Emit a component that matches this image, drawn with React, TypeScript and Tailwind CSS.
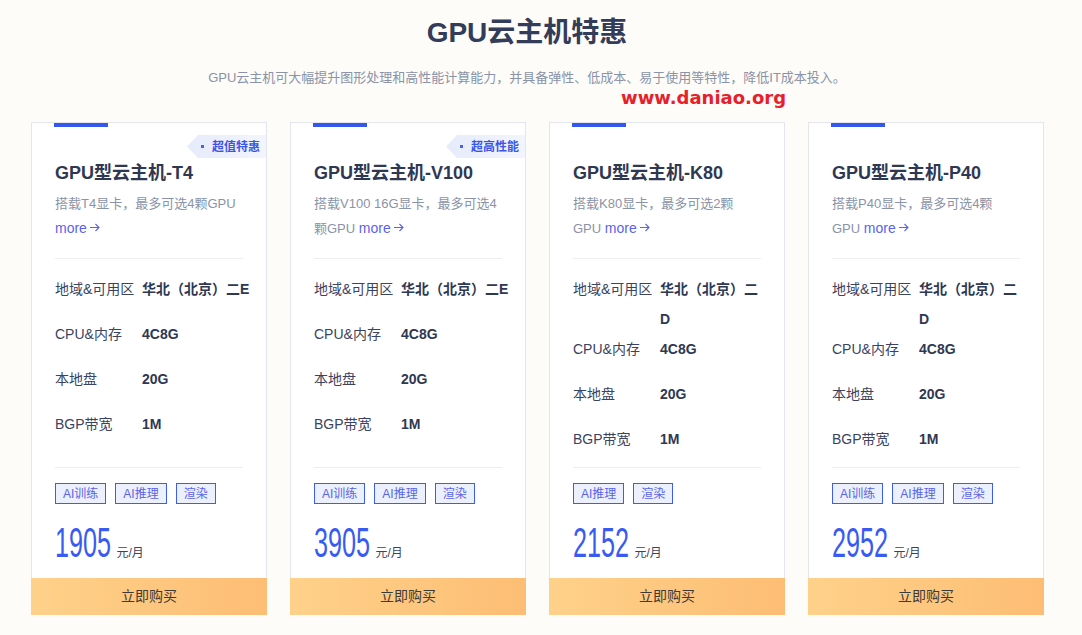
import React from "react";

interface Plan {
  name: string;
  desc: string;
  badge?: string;
  zone: string[];
  tags: string[];
  price: string;
}

const plans: Plan[] = [
  { name: "GPU型云主机-T4", desc: "搭载T4显卡，最多可选4颗GPU", badge: "超值特惠", zone: ["华北（北京）二E"], tags: ["AI训练", "AI推理", "渲染"], price: "1905" },
  { name: "GPU型云主机-V100", desc: "搭载V100 16G显卡，最多可选4颗GPU", badge: "超高性能", zone: ["华北（北京）二E"], tags: ["AI训练", "AI推理", "渲染"], price: "3905" },
  { name: "GPU型云主机-K80", desc: "搭载K80显卡，最多可选2颗GPU", zone: ["华北（北京）二", "D"], tags: ["AI推理", "渲染"], price: "2152" },
  { name: "GPU型云主机-P40", desc: "搭载P40显卡，最多可选4颗GPU", zone: ["华北（北京）二", "D"], tags: ["AI训练", "AI推理", "渲染"], price: "2952" },
];

function SpecRow({ label, children }: { label: string; children: React.ReactNode }) {
  return (
    <div className="flex min-h-[45px] text-[14px] leading-[30px]">
      <div className="w-[87px] shrink-0 text-[#3b4360]">{label}</div>
      <div className="whitespace-nowrap font-bold text-[#2f3852]">{children}</div>
    </div>
  );
}

function PlanCard({ plan }: { plan: Plan }) {
  return (
    <div className="flex w-[236px] flex-col">
      <div className="relative border border-b-0 border-[#e3e6f0] bg-white px-[23px] pt-[37px]">
        <div className="absolute left-[22px] top-0 h-[4px] w-[54px] bg-[#3457ee]"></div>

        {/* corner badge */}
        {plan.badge && (
          <div className="absolute right-0 top-[12px] flex h-[23px] w-[79px] items-center bg-linear-to-r from-[#e6ebfb] to-[#f3f5fd] pl-[14px] [clip-path:polygon(11px_0,100%_0,100%_100%,11px_100%,0_50%)]">
            <span className="h-[3px] w-[3px] bg-[#4a63ee]"></span>
            <span className="ml-[8px] text-[12px] font-bold text-[#3a55e8]">{plan.badge}</span>
          </div>
        )}

        <h3 className="text-[18px] font-bold leading-[26px] text-[#2f3852]">{plan.name}</h3>
        <p className="mt-[5px] w-[185px] text-[13px] leading-[25px] text-[#8a93a7]">
          {plan.desc}{" "}
          <span className="whitespace-nowrap text-[14px] leading-[25px] text-[#5a63ee]">
            more
            <svg className="ml-[3px] inline-block align-[1px]" width="10" height="9" viewBox="0 0 10 9" fill="none" stroke="currentColor" strokeWidth="1.1">
              <path d="M0 4.5h9M5.5 1l3.5 3.5L5.5 8" />
            </svg>
          </span>
        </p>

        <div className="mt-[17px] border-t border-[#eceef4]"></div>

        <div className="h-[208px] pt-[15px]">
          <SpecRow label="地域&可用区">
            {plan.zone.map((z, i) => (
              <React.Fragment key={i}>
                {i > 0 && <br />}
                {z}
              </React.Fragment>
            ))}
          </SpecRow>
          <SpecRow label="CPU&内存">4C8G</SpecRow>
          <SpecRow label="本地盘">20G</SpecRow>
          <SpecRow label="BGP带宽">1M</SpecRow>
        </div>

        <div className="border-t border-[#eceef4]"></div>

        <div className="mt-[15px] flex gap-[9px]">
          {plan.tags.map((t) => (
            <span
              key={t}
              className="flex h-[21px] items-center border border-[#3d5cf0] bg-[#ebf0fc] px-[7px] text-[12px] text-[#5a63e8]"
            >
              {t}
            </span>
          ))}
        </div>

        <div className="mt-[18px] flex items-baseline pb-[14px]">
          <span className="mr-[-37px] inline-block origin-left scale-x-[0.6] text-[42px] leading-[42px] text-[#3a5bf1]">
            {plan.price}
          </span>
          <span className="ml-[5px] text-[12px] text-[#3b4360]">元/月</span>
        </div>
      </div>
      <button className="h-[37px] w-full bg-linear-to-r from-[#fed18a] to-[#fdbd74] text-[14px] text-[#3f3a33]">
        立即购买
      </button>
    </div>
  );
}

export default function App() {
  return (
    <div
      className="relative min-h-screen w-full bg-[#fdfcf8] pb-[20px]"
      style={{ fontFamily: '"Liberation Sans", "Noto Sans CJK SC", sans-serif' }}
    >
      <div className="pr-[28px] pt-[15px] text-center">
        <h1 className="text-[28px] font-bold leading-[36px] text-[#333c58]">GPU云主机特惠</h1>
        <p className="mt-[17px] text-[13px] leading-[20px] text-[#8a93a7]">
          GPU云主机可大幅提升图形处理和高性能计算能力，并具备弹性、低成本、易于使用等特性，降低IT成本投入。
        </p>
      </div>

      {/* watermark */}
      <div
        className="absolute left-[621px] top-[85px] text-[18px] font-bold leading-[26px] text-[#e8202a]"
        style={{ fontFamily: '"DejaVu Sans", sans-serif' }}
      >
        www.daniao.org
      </div>

      <div className="mt-[34px] flex gap-[23px] pl-[31px]">
        {plans.map((p) => (
          <PlanCard key={p.name} plan={p} />
        ))}
      </div>
    </div>
  );
}
